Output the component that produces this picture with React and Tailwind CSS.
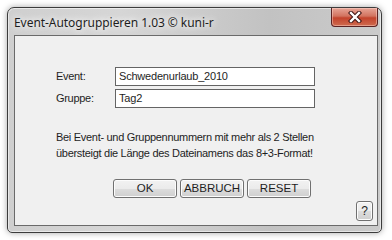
import React from 'react';

const titleFont = { fontFamily: '"Noto Sans", "Liberation Sans", sans-serif' };
const bodyFont = { fontFamily: '"Liberation Sans", Arial, sans-serif' };

const WinButton = ({ children, className = '' }) => (
  <button
    className={`h-[19px] rounded-[3px] border border-[#707070] bg-[linear-gradient(#f2f2f2_0%,#ebebeb_50%,#dddddd_51%,#cfcfcf_100%)] text-[11.5px] leading-none text-[#1e1e1e] shadow-[inset_0_0_0_1px_#fcfcfc] ${className}`}
    style={bodyFont}
  >
    {children}
  </button>
);

const CloseButton = () => (
  <div className="flex h-[19px] w-[47px] items-center justify-center rounded-b-[4px] border border-t-0 border-[#5b2222] bg-[linear-gradient(#e7a597_0%,#d2735f_45%,#c3432c_55%,#cf6b4f_100%)] shadow-[inset_0_0_0_1px_rgba(255,220,210,0.45)]">
    <svg width="14" height="12" viewBox="0 0 14 12">
      <path d="M3 2 L11 10 M11 2 L3 10" stroke="#3b1212" strokeWidth="4.4" strokeLinecap="square" />
      <path d="M3 2 L11 10 M11 2 L3 10" stroke="#ffffff" strokeWidth="2.4" strokeLinecap="square" />
    </svg>
  </div>
);

export default function App() {
  return (
    <div className="h-[240px] w-[392px] overflow-hidden bg-white pl-[7px] pt-[7px]">
      <div className="flex h-[226px] w-[375px] flex-col rounded-t-[7px] rounded-b-[5px] border border-[#3c3c3c] bg-[linear-gradient(90deg,#cfcfcf_0%,#d6d6d6_30%,#c2c2c2_70%,#cbcbcb_100%)] shadow-[0_0_6px_rgba(0,0,0,0.35),inset_0_0_0_1px_rgba(255,255,255,0.55)]">
        {/* title bar */}
        <div className="flex h-[27px] items-start justify-between pl-[6px] pr-[3px]">
          <span
            className="mt-[7px] whitespace-nowrap text-[12px] leading-[15px] tracking-[-0.05px] text-[#1e1e1e] [text-shadow:0_0_6px_#ffffff,0_0_10px_#ffffff]"
            style={titleFont}
          >
            Event-Autogruppieren 1.03 © kuni-r
          </span>
          <CloseButton />
        </div>

        {/* client area */}
        <div
          className="mb-[6px] ml-[6px] mr-[3px] flex flex-1 flex-col border border-[#6a6a6a] bg-[#f0f0f0] pl-[41px] pt-[31px] text-[11px] tracking-[-0.3px] text-[#1e1e1e]"
          style={bodyFont}
        >
          <div className="flex items-center">
            <span className="w-[59px] leading-[15px]">Event:</span>
            <div className="flex h-[19px] w-[200px] items-center border border-[#646464] bg-white px-[3px] leading-none tracking-[-0.2px]">
              Schwedenurlaub_2010
            </div>
          </div>
          <div className="mt-[3px] flex items-center">
            <span className="w-[59px] leading-[15px]">Gruppe:</span>
            <div className="flex h-[19px] w-[200px] items-center border border-[#646464] bg-white px-[3px] leading-none tracking-[-0.2px]">
              Tag2
            </div>
          </div>

          <p className="mt-[21px] whitespace-nowrap leading-[16px]">
            Bei Event- und Gruppennummern mit mehr als 2 Stellen
            <br />
            übersteigt die Länge des Dateinamens das 8+3-Format!
          </p>

          <div className="mt-[18px] flex gap-[3px] pl-[57px] tracking-normal">
            <WinButton className="w-[64px]">OK</WinButton>
            <WinButton className="w-[64px]">ABBRUCH</WinButton>
            <WinButton className="w-[64px]">RESET</WinButton>
          </div>

          <div className="mr-[4px] mt-[3px] flex justify-end tracking-normal">
            <WinButton className="h-[20px] w-[17px] text-[12px]">?</WinButton>
          </div>
        </div>
      </div>
    </div>
  );
}
